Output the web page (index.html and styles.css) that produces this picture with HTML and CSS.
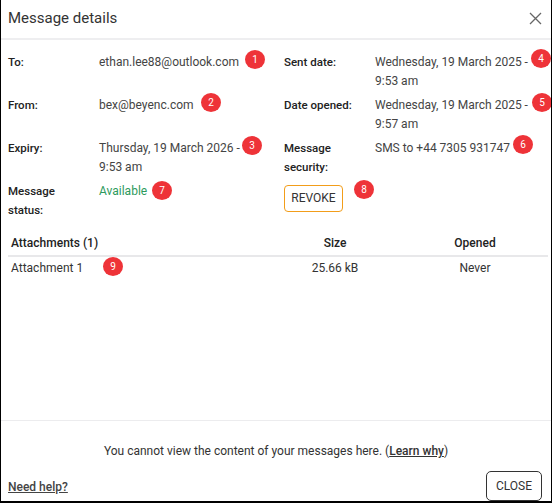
FILE: index.html
```html
<!DOCTYPE html>
<html>
<head>
<meta charset="utf-8">
<link rel="stylesheet" href="styles.css">
</head>
<body>
<div class="dialog">
  <header class="head">
    <h1 class="title">Message details</h1>
    <svg class="close-x" width="13" height="13" viewBox="0 0 13 13"><path d="M1 1L12 12M12 1L1 12" stroke="#666" stroke-width="1.3" fill="none"/></svg>
  </header>
  <section class="details">
    <div class="lbl">To:</div>
    <div class="val">ethan.lee88@outlook.com</div>
    <div class="lbl">Sent date:</div>
    <div class="val">Wednesday, 19 March 2025 -<br>9:53 am</div>

    <div class="lbl">From:</div>
    <div class="val">bex@beyenc.com</div>
    <div class="lbl">Date opened:</div>
    <div class="val">Wednesday, 19 March 2025 -<br>9:57 am</div>

    <div class="lbl">Expiry:</div>
    <div class="val">Thursday, 19 March 2026 -<br>9:53 am</div>
    <div class="lbl">Message<br>security:</div>
    <div class="val">SMS to +44 7305 931747</div>

    <div class="lbl">Message<br>status:</div>
    <div class="val green">Available</div>
    <div class="btn-cell"><button class="revoke">REVOKE</button></div>
    <div></div>
  </section>
  <section class="attach">
    <div class="th name">Attachments (1)</div>
    <div class="th size">Size</div>
    <div class="th opened">Opened</div>
    <div class="td name">Attachment 1</div>
    <div class="td size">25.66 kB</div>
    <div class="td opened">Never</div>
  </section>
  <div class="spacer"></div>
  <footer class="foot">
    <p class="note">You cannot view the content of your messages here. (<a class="link">Learn why</a>)</p>
    <div class="actions">
      <a class="help">Need help?</a>
      <button class="closebtn">CLOSE</button>
    </div>
  </footer>

  <span class="badge b1">1</span>
  <span class="badge b2">2</span>
  <span class="badge b3">3</span>
  <span class="badge b4">4</span>
  <span class="badge b5">5</span>
  <span class="badge b6">6</span>
  <span class="badge b7">7</span>
  <span class="badge b8">8</span>
  <span class="badge b9">9</span>
</div>
</body>
</html>
```
FILE: styles.css
```css
* { box-sizing: border-box; }
html, body { margin: 0; padding: 0; background: #fff; }
body { font-family: Roboto, "Noto Sans", sans-serif; color: #333; }
.dialog {
  position: relative;
  width: 552px;
  height: 503px;
  border-left: 1px solid #000;
  border-right: 1px solid #000;
  border-bottom: 2px solid #000;
  display: flex;
  flex-direction: column;
  overflow: hidden;
}
.head {
  height: 40px;
  display: flex;
  align-items: center;
  justify-content: space-between;
  padding: 0 9px 2px 7px;
  border-bottom: 2px solid #eeeef0;
}
.title { margin: 0; font-size: 15px; font-weight: 400; color: #333; }
.close-x { display: block; }
.details {
  display: grid;
  grid-template-columns: 91px 185px 91px 1fr;
  row-gap: 5px;
  padding: 13px 0 0 7px;
  font-size: 12px;
  line-height: 19px;
}
.lbl { font-weight: 500; color: #222; font-size: 11.5px; }
.val { color: #444; white-space: nowrap; }
.green { color: #2c9a5c; }
.btn-cell { padding-top: 3px; }
.revoke {
  font: inherit;
  font-size: 12px;
  color: #333;
  background: #fff;
  border: 1.5px solid #f29d1a;
  border-radius: 4px;
  width: 59px;
  height: 27px;
  padding: 0;
}
.attach {
  display: grid;
  grid-template-columns: 260px 134px 146px;
  margin: 14px 7px 0 7px;
  font-size: 12px;
  line-height: 19px;
}
.th { font-weight: 500; color: #222; padding: 0 0 2px; border-bottom: 2px solid #e8e8ea; }
.td { color: #333; padding: 2px 0; }
.name { padding-left: 3px; }
.size, .opened { text-align: center; }
.spacer { flex: 1; }
.foot { border-top: 1px solid #ececee; }
.note { margin: 21px 0 0; text-align: center; font-size: 12px; line-height: 19px; color: #333; }
.link { color: #333; font-weight: 500; text-decoration: underline; }
.actions {
  display: flex;
  justify-content: space-between;
  align-items: flex-end;
  padding: 10px 9px 0 7px;
}
.help { font-size: 12px; font-weight: 500; color: #444; text-decoration: underline; line-height: 19px; padding-bottom: 4px; }
.closebtn {
  font: inherit;
  font-size: 12px;
  color: #333;
  background: #fff;
  border: 1.5px solid #333;
  border-radius: 5px;
  width: 56px;
  height: 30px;
  padding: 0;
  margin-bottom: 0;
}
.badge {
  position: absolute;
  width: 20px;
  height: 19px;
  border-radius: 50%;
  background: #ee3338;
  color: #fff;
  font-size: 10px;
  line-height: 19px;
  text-align: center;
  font-weight: 400;
}
.b1 { left: 244px; top: 50px; }
.b2 { left: 200px; top: 93px; }
.b3 { left: 241px; top: 136px; }
.b4 { left: 530px; top: 49px; }
.b5 { left: 531px; top: 93px; }
.b6 { left: 512px; top: 135px; }
.b7 { left: 151px; top: 181px; }
.b8 { left: 353px; top: 180px; }
.b9 { left: 102px; top: 257px; }
```
